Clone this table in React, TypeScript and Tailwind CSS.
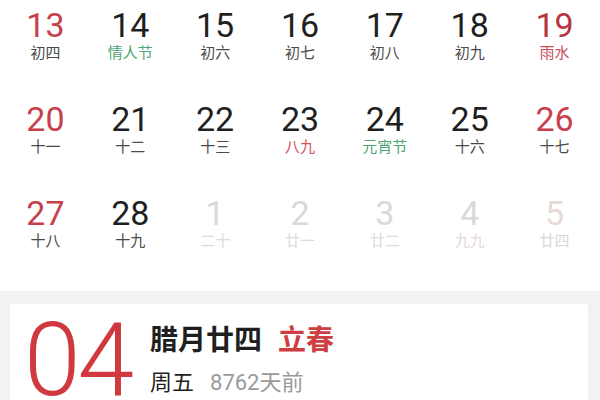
import React from "react";

type Day = {
  num: string;
  sub: string;
  numColor: string;
  subColor: string;
};

const RED = "text-[#c8404c]";
const BLACK = "text-[#1f1f1f]";
const GRAY = "text-[#4a4a4a]";
const GREEN = "text-[#4fa674]";
const FADE = "text-[#d9d9d9]";

const rows: Day[][] = [
  [
    { num: "13", sub: "初四", numColor: RED, subColor: GRAY },
    { num: "14", sub: "情人节", numColor: BLACK, subColor: GREEN },
    { num: "15", sub: "初六", numColor: BLACK, subColor: GRAY },
    { num: "16", sub: "初七", numColor: BLACK, subColor: GRAY },
    { num: "17", sub: "初八", numColor: BLACK, subColor: GRAY },
    { num: "18", sub: "初九", numColor: BLACK, subColor: GRAY },
    { num: "19", sub: "雨水", numColor: "text-[#b8343f]", subColor: "text-[#c4505a]" },
  ],
  [
    { num: "20", sub: "十一", numColor: RED, subColor: GRAY },
    { num: "21", sub: "十二", numColor: BLACK, subColor: GRAY },
    { num: "22", sub: "十三", numColor: BLACK, subColor: GRAY },
    { num: "23", sub: "八九", numColor: BLACK, subColor: "text-[#d2525c]" },
    { num: "24", sub: "元宵节", numColor: BLACK, subColor: GREEN },
    { num: "25", sub: "十六", numColor: BLACK, subColor: GRAY },
    { num: "26", sub: "十七", numColor: RED, subColor: GRAY },
  ],
  [
    { num: "27", sub: "十八", numColor: RED, subColor: GRAY },
    { num: "28", sub: "十九", numColor: BLACK, subColor: GRAY },
    { num: "1", sub: "二十", numColor: FADE, subColor: "text-[#dcdcdc]" },
    { num: "2", sub: "廿一", numColor: FADE, subColor: "text-[#dcdcdc]" },
    { num: "3", sub: "廿二", numColor: FADE, subColor: "text-[#dcdcdc]" },
    { num: "4", sub: "九九", numColor: FADE, subColor: "text-[#e6d6d8]" },
    { num: "5", sub: "廿四", numColor: "text-[#ead8d8]", subColor: "text-[#d8d8d8]" },
  ],
];

export default function App() {
  return (
    <div className="w-[600px] h-[400px] overflow-hidden bg-white font-['Roboto','Noto_Sans_CJK_SC',sans-serif]">
      <div className="h-[291px] px-[3px]">
        {rows.map((row, i) => (
          <div key={i} className="grid grid-cols-7 h-[94px] pt-[7px]">
            {row.map((d) => (
              <div key={d.num + d.sub} className="flex flex-col items-center">
                <span className={`h-[36px] leading-[36px] text-[34px] ${d.numColor}`}>
                  {d.num}
                </span>
                <span className={`h-[20px] leading-[20px] text-[15px] ${d.subColor}`}>
                  {d.sub}
                </span>
              </div>
            ))}
          </div>
        ))}
      </div>

      <div className="h-[109px] bg-[#f2f2f2] pt-[13px] pl-[10px] pr-[12px]">
        <div className="h-full bg-white rounded-tr-[4px] flex">
          <div className="w-[140px] pl-[14px] pt-[5px] text-[102px] leading-[102px] font-light text-[#d0393f] tracking-[-3px]">
            04
          </div>
          <div className="flex flex-col pt-[21px]">
            <div className="flex items-center gap-[16px] h-[32px] text-[28px] leading-[32px] font-bold">
              <span className="text-[#1f1f1f]">腊月廿四</span>
              <span className="text-[#cf3c42]">立春</span>
            </div>
            <div className="flex items-center gap-[16px] mt-[12px] h-[28px] text-[22px] leading-[28px]">
              <span className="text-[#1f1f1f]">周五</span>
              <span className="text-[#9a9a9a]">8762天前</span>
            </div>
          </div>
        </div>
      </div>
    </div>
  );
}
